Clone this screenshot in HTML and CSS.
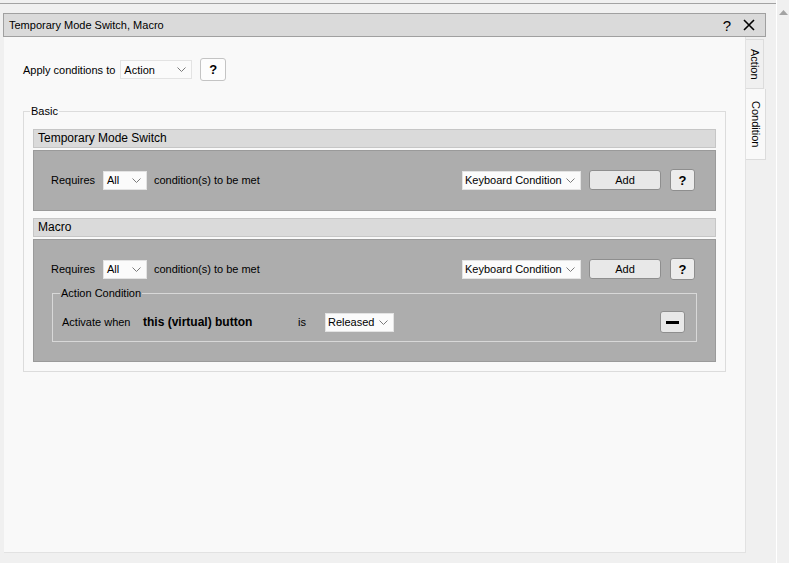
FILE: index.html
```html
<!doctype html>
<html lang="en">
<head>
  <meta charset="utf-8">
  <title>Temporary Mode Switch, Macro</title>
  <link rel="stylesheet" href="styles.css">
</head>
<body>
  <div class="screen">
    <div class="main">
      <div class="topline"></div>
      <div class="dialog">
        <div class="titlebar">
          <span class="title">Temporary Mode Switch, Macro</span>
          <span class="title-btns">
            <span class="title-help">?</span>
            <svg class="title-close" width="12" height="12" viewBox="0 0 12 12">
              <path d="M1 1 L11 11 M11 1 L1 11" stroke="#000" stroke-width="1.6" fill="none"/>
            </svg>
          </span>
        </div>
        <div class="dialog-body">
          <div class="panel">
            <div class="apply-row">
              <span class="lbl">Apply conditions to</span>
              <div class="combo combo-action"><span>Action</span><svg class="chev" width="9" height="5" viewBox="0 0 9 5"><polyline points="0.5,0.5 4.5,4.5 8.5,0.5" fill="none" stroke="#7a7a7a"/></svg></div>
              <button class="btn btn-help btn-light">?</button>
            </div>

            <fieldset class="group basic">
              <legend>Basic</legend>

              <div class="section">
                <div class="section-head">Temporary Mode Switch</div>
                <div class="section-body">
                  <div class="req-row">
                    <span class="req-lbl">Requires</span>
                    <div class="combo combo-all"><span>All</span><svg class="chev" width="9" height="5" viewBox="0 0 9 5"><polyline points="0.5,0.5 4.5,4.5 8.5,0.5" fill="none" stroke="#7a7a7a"/></svg></div>
                    <span>condition(s) to be met</span>
                    <div class="combo combo-kb"><span>Keyboard Condition</span><svg class="chev" width="9" height="5" viewBox="0 0 9 5"><polyline points="0.5,0.5 4.5,4.5 8.5,0.5" fill="none" stroke="#7a7a7a"/></svg></div>
                    <button class="btn btn-add">Add</button>
                    <button class="btn btn-help">?</button>
                  </div>
                </div>
              </div>

              <div class="section">
                <div class="section-head">Macro</div>
                <div class="section-body">
                  <div class="req-row">
                    <span class="req-lbl">Requires</span>
                    <div class="combo combo-all"><span>All</span><svg class="chev" width="9" height="5" viewBox="0 0 9 5"><polyline points="0.5,0.5 4.5,4.5 8.5,0.5" fill="none" stroke="#7a7a7a"/></svg></div>
                    <span>condition(s) to be met</span>
                    <div class="combo combo-kb"><span>Keyboard Condition</span><svg class="chev" width="9" height="5" viewBox="0 0 9 5"><polyline points="0.5,0.5 4.5,4.5 8.5,0.5" fill="none" stroke="#7a7a7a"/></svg></div>
                    <button class="btn btn-add">Add</button>
                    <button class="btn btn-help">?</button>
                  </div>

                  <fieldset class="group cond">
                    <legend>Action Condition</legend>
                    <div class="cond-row">
                      <span class="cond-lbl">Activate when</span>
                      <span class="cond-src">this (virtual) button</span>
                      <span class="cond-is">is</span>
                      <div class="combo combo-rel"><span>Released</span><svg class="chev" width="9" height="5" viewBox="0 0 9 5"><polyline points="0.5,0.5 4.5,4.5 8.5,0.5" fill="none" stroke="#7a7a7a"/></svg></div>
                      <button class="btn btn-minus"><span class="minus"></span></button>
                    </div>
                  </fieldset>
                </div>
              </div>
            </fieldset>
          </div>

          <div class="tabs">
            <div class="tab">Action</div>
            <div class="tab active">Condition</div>
          </div>
        </div>
      </div>
    </div>
    <div class="scrollbar">
      <svg width="9" height="6" viewBox="0 0 9 6"><polygon points="4.5,0 9,5 0,5" fill="#a3a3a3"/></svg>
    </div>
  </div>
</body>
</html>
```

FILE: styles.css
```css
* { box-sizing: border-box; }

body {
  margin: 0;
  background: #f0f0f0;
  font-family: "Liberation Sans", Arial, sans-serif;
  font-size: 11px;
  color: #000;
}

.screen {
  display: flex;
  height: 563px;
  overflow: hidden;
}
.main { width: 776px; }
.scrollbar {
  flex: 1;
  border-left: 1px solid #fff;
  padding: 10px 0 0 2px;
}
.scrollbar svg { display: block; }

.topline {
  height: 4px;
  border-bottom: 1px solid #a3a3a3;
}

/* dialog */
.dialog {
  margin: 9px 0 0 3px;
  width: 763px;
}
.titlebar {
  height: 24px;
  border: 1px solid #a0a0a0;
  background: #dadada;
  display: flex;
  align-items: center;
  padding: 0 10px 0 5px;
}
.title { font-size: 11px; flex: 1; }
.title-btns { display: flex; align-items: center; gap: 12px; }
.title-help { font-size: 15px; line-height: 1; }
.title-close { display: block; }

.dialog-body {
  display: flex;
  height: 516px;
}
.panel {
  width: 742px;
  margin-left: 1px;
  background: #f9f9f9;
  border-right: 1px solid #e2e2e2;
  border-bottom: 1px solid #e2e2e2;
  padding: 21px 0 0 19px;
}

.tabs { padding-top: 2px; }
.tab {
  writing-mode: vertical-rl;
  font-size: 11px;
  width: 18px;
  height: 50px;
  display: flex;
  align-items: center;
  justify-content: center;
  background: #f0f0f0;
  border: 1px solid #dcdcdc;
  border-left: none;
}
.tab.active {
  width: 20px;
  height: 71px;
  background: #f9f9f9;
  border-top: none;
}

/* controls */
.apply-row {
  display: flex;
  align-items: center;
  height: 23px;
}
.lbl { margin-right: 5px; }

.combo {
  display: flex;
  align-items: center;
  justify-content: space-between;
  height: 19px;
  padding: 0 5px 0 3px;
  background: #fbfbfb;
  border: 1px solid #e3e3e3;
  font-size: 11px;
}
.chev { display: block; flex: none; }
.combo-action { width: 72px; margin-right: 8px; }
.combo-all { width: 44px; margin-right: 7px; }
.combo-kb { width: 119px; margin-left: auto; margin-right: 8px; padding-left: 2px; }
.combo-rel { width: 69px; padding-left: 2px; }

.btn {
  font-family: inherit;
  font-size: 11px;
  color: #000;
  height: 20px;
  padding: 0;
  background: #e8e8e8;
  border: 1px solid #8e8e8e;
  border-radius: 3px;
  display: flex;
  align-items: center;
  justify-content: center;
}
.btn-help {
  width: 25px;
  height: 22px;
  font-weight: bold;
  font-size: 13px;
  background: #ececec;
}
.btn-light {
  width: 26px;
  height: 23px;
  background: #fdfdfd;
  border-color: #c4c4c4;
}
.btn-add { width: 72px; margin-right: 9px; }
.btn-minus { width: 25px; height: 22px; margin-left: auto; }
.minus {
  display: block;
  width: 13px;
  height: 3px;
  background: #000;
}

/* group boxes */
.group {
  margin: 0;
  border: 1px solid #dcdcdc;
  min-width: 0;
}
.group legend {
  padding: 0 1px;
  font-size: 11px;
  line-height: 13px;
}
.basic {
  width: 703px;
  margin-top: 24px;
  padding: 11px 9px 9px 9px;
}
.basic legend { margin-left: -3px; }

.section + .section { margin-top: 7px; }
.section-head {
  height: 19px;
  background: #dadada;
  border: 1px solid #c6c6c6;
  padding-left: 4px;
  font-size: 12px;
  line-height: 17px;
}
.section-body {
  margin-top: 2px;
  background: #adadad;
  border: 1px solid #9a9a9a;
  padding: 18px 20px 19px 17px;
}

.req-row {
  display: flex;
  align-items: center;
  height: 22px;
}
.req-lbl { width: 52px; }

.cond {
  margin: 7px -2px 0 1px;
  border-color: #d8d8d8;
  padding: 11px 11px 8px 9px;
}
.cond legend { margin-left: -2px; }
.cond-row {
  display: flex;
  align-items: center;
  height: 22px;
}
.cond-lbl { width: 81px; }
.cond-src { width: 155px; font-weight: bold; font-size: 12px; }
.cond-is { width: 27px; }
```
